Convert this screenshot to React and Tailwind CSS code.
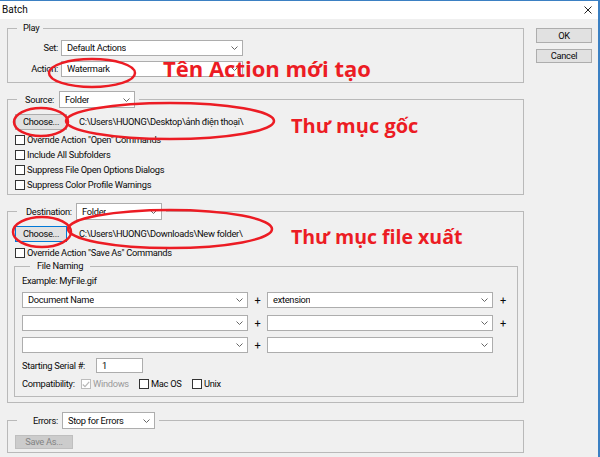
import React from "react";

const UI = { fontFamily: 'Roboto, "Noto Sans", sans-serif' };
const RED = { fontFamily: '"Open Sans", "Noto Sans", sans-serif' };

function Chevron() {
  return (
    <svg width="7" height="4" viewBox="0 0 7 4" className="shrink-0">
      <path d="M0.5 0.5 L3.5 3.5 L6.5 0.5" fill="none" stroke="#666" strokeWidth="1" />
    </svg>
  );
}

function Select({ w, h = "h-[16px]", children }) {
  return (
    <div className={`${w} ${h} flex items-center justify-between bg-white border border-[#adadad] pl-[5px] pr-[4px] shrink-0`}>
      <span className="truncate">{children}</span>
      <Chevron />
    </div>
  );
}

function Check({ checked, disabled }) {
  return (
    <span
      className={`w-[10px] h-[10px] shrink-0 bg-white border ${disabled ? "border-[#bcbcbc]" : "border-[#333]"} flex items-center justify-center`}
    >
      {checked && (
        <svg width="8" height="7" viewBox="0 0 8 7">
          <path d="M0.8 3.5 L3 5.7 L7.2 0.8" fill="none" stroke="#b8b8b8" strokeWidth="1.2" />
        </svg>
      )}
    </span>
  );
}

function CheckRow({ children }) {
  return (
    <div className="h-[15px] flex items-center">
      <Check />
      <span className="ml-[2px]">{children}</span>
    </div>
  );
}

function Btn({ w, h = "h-[16px]", focus, disabled, children }) {
  return (
    <div
      className={`${w} ${h} flex items-center justify-center shrink-0 border ${
        disabled
          ? "bg-[#cccccc] border-[#bfbfbf] text-[#838383]"
          : focus
          ? "bg-[#e1e1e1] border-[#0078d7]"
          : "bg-[#e1e1e1] border-[#adadad]"
      }`}
    >
      {children}
    </div>
  );
}

function NameRow({ left, right, plus2 = true, mt }) {
  return (
    <div className={`flex items-center ${mt}`}>
      <Select w="w-[226px]">{left}</Select>
      <span className="w-[19px] text-center text-[11px] leading-none">+</span>
      <Select w="w-[226px]">{right}</Select>
      {plus2 && <span className="w-[20px] text-center text-[11px] leading-none">+</span>}
    </div>
  );
}

export default function App() {
  return (
    <div
      className="relative w-[600px] h-[457px] overflow-hidden bg-[#f0f0f0] border-r-2 border-[#3b80c3] text-[9.3px] tracking-[-0.3px] leading-[12px] text-[#0a0a0a]"
      style={UI}
    >
      {/* Title bar */}
      <div className="h-[19px] bg-white border-t border-[#3b80c3] flex items-center justify-between pl-[2px] pr-[6px]">
        <span className="text-[10px] tracking-normal">Batch</span>
        <svg width="8" height="8" viewBox="0 0 8 8">
          <path d="M0.5 0.5 L7.5 7.5 M7.5 0.5 L0.5 7.5" stroke="#222" strokeWidth="1" />
        </svg>
      </div>

      <div className="flex">
        {/* Left column */}
        <div className="ml-[7px] w-[517px] flex flex-col">
          {/* Play */}
          <fieldset className="mt-[3px] border border-[#b9b9b9] pb-[5px]">
            <legend className="ml-[9px] pl-[6px] pr-[4px] h-[12px]">Play</legend>
            <div className="grid grid-cols-[50px_182px] gap-x-[3px] gap-y-[5px] pt-[6px] items-center">
              <span className="text-right">Set:</span>
              <Select w="w-[182px]">Default Actions</Select>
              <span className="text-right">Action:</span>
              <Select w="w-[182px]">Watermark</Select>
            </div>
          </fieldset>

          {/* Source */}
          <fieldset className="mt-[8px] border border-[#b9b9b9] pb-[2px] pl-[7px]">
            <legend className="ml-[2px] pl-[8px] pr-[4px] flex items-center">
              <span className="w-[34px]">Source:</span>
              <Select w="w-[76px]" h="h-[17px]">Folder</Select>
            </legend>
            <div className="mt-[6px] flex items-center">
              <Btn w="w-[52px]">Choose...</Btn>
              <span className="ml-[12px]">C:\Users\HUONG\Desktop\ảnh điện thoại\</span>
            </div>
            <div className="mt-[2px]">
              <CheckRow>Override Action "Open" Commands</CheckRow>
              <CheckRow>Include All Subfolders</CheckRow>
              <CheckRow>Suppress File Open Options Dialogs</CheckRow>
              <CheckRow>Suppress Color Profile Warnings</CheckRow>
            </div>
          </fieldset>

          {/* Destination */}
          <fieldset className="mt-[8px] border border-[#b9b9b9] pb-[5px] pl-[7px] pr-[5px]">
            <legend className="ml-[2px] pl-[9px] pr-[4px] flex items-center">
              <span className="w-[50px]">Destination:</span>
              <Select w="w-[86px]" h="h-[17px]">Folder</Select>
            </legend>
            <div className="mt-[6px] flex items-center">
              <Btn w="w-[52px]" focus>Choose...</Btn>
              <span className="ml-[12px]">C:\Users\HUONG\Downloads\New folder\</span>
            </div>
            <div className="mt-[3px]">
              <CheckRow>Override Action "Save As" Commands</CheckRow>
            </div>
            <fieldset className="-ml-[1px] border border-[#b9b9b9] pb-[5px] pl-[7px]">
              <legend className="ml-[8px] px-[7px] h-[12px]">File Naming</legend>
              <div className="mt-[3px] h-[12px]">Example: MyFile.gif</div>
              <NameRow mt="mt-[5px]" left="Document Name" right="extension" />
              <NameRow mt="mt-[7px]" left="" right="" />
              <NameRow mt="mt-[6px]" left="" right="" plus2={false} />
              <div className="mt-[5px] flex items-center h-[15px]">
                <span className="w-[74px]">Starting Serial #:</span>
                <div className="w-[47px] h-[15px] bg-white border border-[#adadad] pl-[5px] flex items-center">1</div>
              </div>
              <div className="mt-[4px] flex items-center h-[14px]">
                <span className="w-[59px]">Compatibility:</span>
                <span className="w-[58px] flex items-center">
                  <Check checked disabled />
                  <span className="ml-[2px] text-[#9a9a9a]">Windows</span>
                </span>
                <span className="w-[53px] flex items-center">
                  <Check />
                  <span className="ml-[2px]">Mac OS</span>
                </span>
                <span className="flex items-center">
                  <Check />
                  <span className="ml-[2px]">Unix</span>
                </span>
              </div>
            </fieldset>
          </fieldset>

          {/* Errors */}
          <fieldset className="mt-[9px] border border-[#b9b9b9] pb-[3px] pl-[7px]">
            <legend className="ml-[2px] pl-[16px] pr-[4px] flex items-center">
              <span className="w-[29px]">Errors:</span>
              <Select w="w-[93px]" h="h-[17px]">Stop for Errors</Select>
            </legend>
            <div className="mt-[6px] flex">
              <Btn w="w-[58px]" h="h-[14px]" disabled>Save As...</Btn>
            </div>
          </fieldset>
        </div>

        {/* Right column */}
        <div className="ml-[12px] pt-[9px] flex flex-col gap-[6px]">
          <Btn w="w-[56px]" h="h-[15px]">OK</Btn>
          <Btn w="w-[56px]" h="h-[14px]">Cancel</Btn>
        </div>
      </div>

      {/* Red annotations (overlay) */}
      <svg className="absolute inset-0 pointer-events-none" width="600" height="457" viewBox="0 0 600 457">
        <g fill="none" stroke="#ec1c24" strokeWidth="2.5">
          <ellipse cx="92" cy="73" rx="43" ry="14" />
          <ellipse cx="41" cy="122" rx="27" ry="14" />
          <ellipse cx="170" cy="121" rx="104" ry="18" />
          <ellipse cx="42" cy="232" rx="29" ry="15" />
          <ellipse cx="170" cy="229" rx="102" ry="19" />
        </g>
      </svg>
      <div className="absolute left-[163px] top-[57px] text-[22px] leading-[22px] tracking-normal font-bold text-[#ec1c24] whitespace-nowrap" style={RED}>
        Tên Action mới tạo
      </div>
      <div className="absolute left-[291px] top-[116px] text-[20px] leading-[20px] tracking-normal font-bold text-[#ec1c24] whitespace-nowrap" style={RED}>
        Thư mục gốc
      </div>
      <div className="absolute left-[291px] top-[227px] text-[19.5px] leading-[20px] tracking-normal font-bold text-[#ec1c24] whitespace-nowrap" style={RED}>
        Thư mục file xuất
      </div>
    </div>
  );
}
